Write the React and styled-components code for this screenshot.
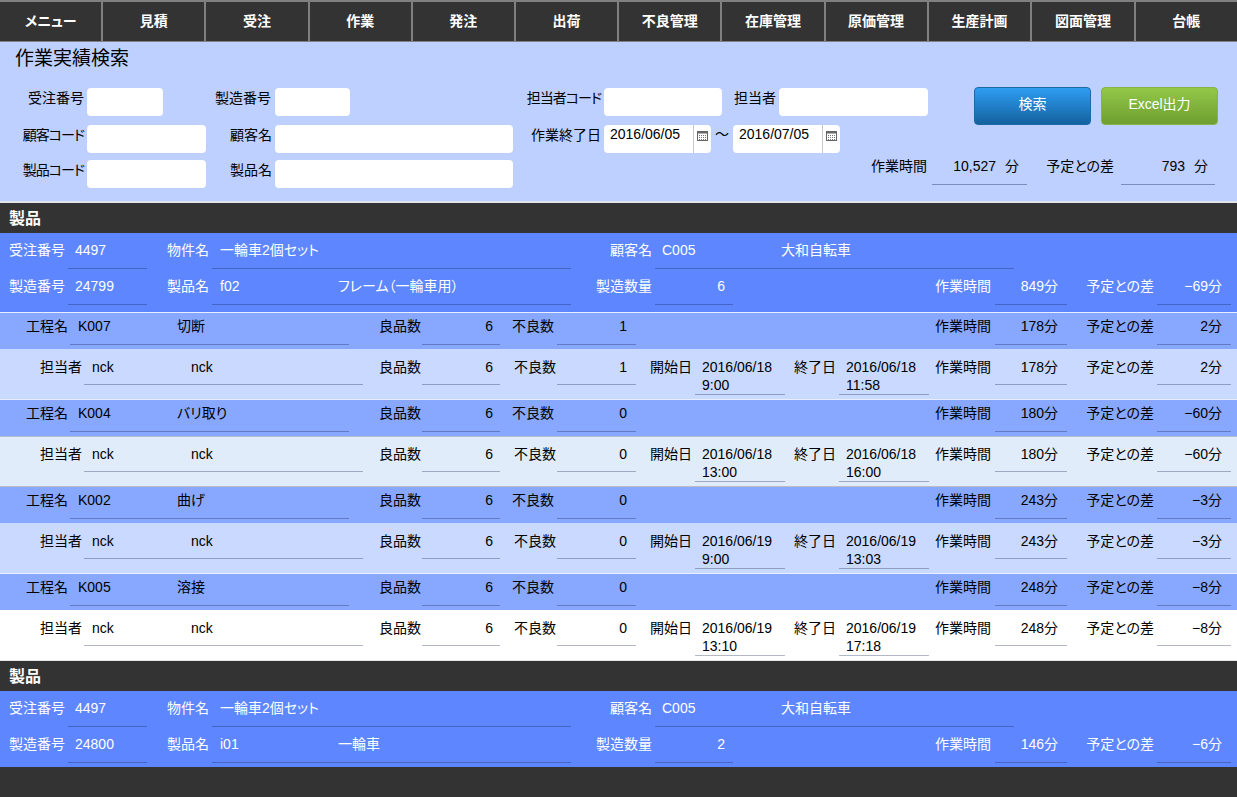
import React from "react";
import styled, { createGlobalStyle } from "styled-components";

const Global = createGlobalStyle`
  html, body { margin: 0; padding: 0; background: #333; height: 100%; overflow: hidden; }
  body {
    font-family: "Liberation Sans", "Noto Sans CJK JP", sans-serif;
    font-size: 14px;
    color: #000;
    font-feature-settings: "palt";
  }
  * { box-sizing: border-box; }
`;

const Nav = styled.nav`
  display: grid;
  grid-template-columns: repeat(9, 103.2px) repeat(2, 103.5px) 1fr;
  height: 42px;
  background: #333;
  border-top: 2px solid #808080;
  border-bottom: 1px solid #808080;
`;
const NavItem = styled.a`
  display: flex;
  align-items: center;
  justify-content: center;
  padding-bottom: 3px;
  color: #fff;
  font-weight: 700;
  font-size: 14px;
  border-right: 2px solid #808080;
  &:last-child { border-right: none; }
`;

const Panel = styled.section`
  height: 161px;
  background: #bdd0ff;
  border-bottom: 2px solid #dfe3ea;
`;
const Title = styled.h1`
  margin: 0;
  padding: 6px 0 0 15px;
  height: 45px;
  font-size: 19px;
  font-weight: 400;
  line-height: 22px;
`;
const Top = styled.div`
  display: flex;
  align-items: flex-start;
`;
const Fields = styled.div`
  display: flex;
  flex-direction: column;
  padding-top: 1px;
  width: 928px;
`;
const FormRow = styled.div`
  display: flex;
  align-items: flex-start;
  height: 28px;
  margin-bottom: ${(p) => p.$mb || 0}px;
`;
const FormLabel = styled.label`
  display: block;
  width: ${(p) => p.$w}px;
  margin-right: ${(p) => p.$mr ?? 3}px;
  text-align: right;
  line-height: 20px;
  letter-spacing: ${(p) => (p.$tight ? "-1px" : "0")};
  white-space: nowrap;
  flex: none;
`;
const Input = styled.input`
  display: block;
  flex: none;
  width: ${(p) => p.$w}px;
  height: 28px;
  padding: 0 6px;
  border: none;
  border-radius: 4px;
  background: #fff;
  box-shadow: 0 0 1px #c4cfe6;
  outline: none;
`;
const DateBox = styled.div`
  display: flex;
  flex: none;
  width: 107px;
  height: 28px;
  background: #fff;
  border-radius: 4px;
  box-shadow: 0 0 1px #c4cfe6;
`;
const DateText = styled.span`
  flex: 1;
  padding-left: 6px;
  line-height: 19px;
  border-right: 1px solid #c8c8c8;
`;
const CalButton = styled.span`
  display: flex;
  width: 17px;
  justify-content: center;
  padding-top: 6px;
`;
const Tilde = styled.span`
  flex: none;
  width: 22px;
  text-align: center;
  line-height: 18px;
`;
const Buttons = styled.div`
  display: flex;
  gap: 10px;
  margin-left: 46px;
`;
const Button = styled.button`
  width: 117px;
  height: 38px;
  padding: 0 0 7px;
  color: #fff;
  font: inherit;
  border-radius: 4px;
  border: 1px solid ${(p) => (p.$green ? "#85b542" : "#1b6aa8")};
  background: ${(p) =>
    p.$green
      ? "linear-gradient(#93c748, #6e9f30)"
      : "linear-gradient(#2f9df2, #14629f)"};
`;
const SumValue = styled.div`
  display: flex;
  flex: none;
  width: ${(p) => p.$w}px;
  height: 25px;
  line-height: 12px;
  border-bottom: 1px solid rgba(40, 60, 110, 0.45);
`;
const SumNumber = styled.span`
  width: 64px;
  text-align: right;
  margin-right: 9px;
`;
const SumLabel = styled(FormLabel)`
  line-height: 12px;
`;

const Header = styled.h2`
  margin: 0;
  height: 30px;
  padding-left: 9px;
  background: #333;
  color: #fff;
  font-size: 16px;
  font-weight: 700;
  line-height: 32px;
`;
const Product = styled.section`
  background: #5d86ff;
  color: #fff;
  padding-bottom: ${(p) => p.$pb}px;
  border-bottom: ${(p) => (p.$line ? "1px solid #e8eeff" : "none")};
`;
const Row = styled.div`
  display: flex;
  align-items: flex-start;
  height: 36px;
  --cell-h: 36px;
  --text-h: 34px;
`;
const Process = styled(Row)`
  background: #88a8ff;
  --cell-h: 32px;
  --text-h: 27px;
`;
const Worker = styled(Row)`
  height: 51px;
  --cell-h: 35px;
  --text-h: 34px;
  background: ${(p) => p.$bg};
  border-top: 1px solid ${(p) => p.$topLine || p.$bg};
  border-bottom: 1px solid ${(p) => p.$bottomLine || "#e8eeff"};
`;
const Label = styled.span`
  flex: none;
  width: ${(p) => p.$w}px;
  margin-right: ${(p) => p.$mr ?? 3}px;
  text-align: right;
  line-height: var(--text-h);
  white-space: nowrap;
`;
const Value = styled.span`
  flex: none;
  width: ${(p) => p.$w}px;
  height: var(--cell-h);
  line-height: var(--text-h);
  padding: ${(p) => (p.$right ? `0 ${p.$pad ?? 8}px 0 0` : `0 0 0 ${p.$pad ?? 8}px`)};
  text-align: ${(p) => (p.$right ? "right" : "left")};
  border-bottom: 1px solid rgba(20, 30, 70, 0.32);
  white-space: nowrap;
`;
const DateValue = styled.span`
  flex: none;
  display: block;
  width: 90px;
  height: 45px;
  padding: 8px 0 0 7px;
  line-height: 18px;
  border-bottom: 1px solid rgba(20, 30, 70, 0.32);
  white-space: nowrap;
`;
const MetricGroup = styled.div`
  display: flex;
  margin-left: auto;
  padding-right: 6px;
`;

const Calendar = () => (
  <svg width="11" height="10" viewBox="0 0 11 10">
    <rect x="0.5" y="0.5" width="10" height="9" fill="#fff" stroke="#666" />
    <rect x="0" y="0" width="11" height="2.5" fill="#666" />
    {[2, 4, 6, 8].map((x) =>
      [4, 6, 8].map((y) => <rect key={`${x}-${y}`} x={x} y={y} width="1" height="1" fill="#777" />)
    )}
  </svg>
);

const DateField = ({ value }) => (
  <DateBox>
    <DateText>{value}</DateText>
    <CalButton><Calendar /></CalButton>
  </DateBox>
);

const Metrics = ({ time, diff }) => (
  <MetricGroup>
    <Label $w={56} $mr={4}>作業時間</Label>
    <Value $w={72} $right $pad={9}>{time}分</Value>
    <Label $w={87}>予定との差</Label>
    <Value $w={74} $right $pad={9}>{diff}分</Value>
  </MetricGroup>
);

const ProductBlock = ({ pb, line, no, code, name, qty, time, diff }) => (
  <Product $pb={pb} $line={line}>
    <Row>
      <Label $w={65}>受注番号</Label>
      <Value $w={79} $pad={7}>4497</Value>
      <Label $w={62}>物件名</Label>
      <Value $w={359}>一輪車2個セット</Value>
      <Label $w={81}>顧客名</Label>
      <Value $w={118} $pad={7}>C005</Value>
      <Value $w={241}>大和自転車</Value>
    </Row>
    <Row>
      <Label $w={65}>製造番号</Label>
      <Value $w={79} $pad={7}>{no}</Value>
      <Label $w={62}>製品名</Label>
      <Value $w={119}>{code}</Value>
      <Value $w={240} $pad={7}>{name}</Value>
      <Label $w={81}>製造数量</Label>
      <Value $w={78} $right>{qty}</Value>
      <Metrics time={time} diff={diff} />
    </Row>
  </Product>
);

const Step = ({ code, name, good, bad, time, diff }) => (
  <Process>
    <Label $w={68} $mr={2}>工程名</Label>
    <Value $w={99}>{code}</Value>
    <Value $w={180}>{name}</Value>
    <Label $w={72} $mr={1}>良品数</Label>
    <Value $w={78} $right $pad={7}>{good}</Value>
    <Label $w={54}>不良数</Label>
    <Value $w={79} $right $pad={9}>{bad}</Value>
    <Metrics time={time} diff={diff} />
  </Process>
);

const Work = ({ bg, topLine, bottomLine, good, bad, start, end, time, diff }) => (
  <Worker $bg={bg} $topLine={topLine} $bottomLine={bottomLine}>
    <Label $w={82} $mr={2}>担当者</Label>
    <Value $w={99}>nck</Value>
    <Value $w={180}>nck</Value>
    <Label $w={58} $mr={1}>良品数</Label>
    <Value $w={78} $right $pad={7}>{good}</Value>
    <Label $w={56} $mr={1}>不良数</Label>
    <Value $w={79} $right $pad={9}>{bad}</Value>
    <Label $w={56}>開始日</Label>
    <DateValue>{start[0]}<br />{start[1]}</DateValue>
    <Label $w={51}>終了日</Label>
    <DateValue>{end[0]}<br />{end[1]}</DateValue>
    <Metrics time={time} diff={diff} />
  </Worker>
);

const menu = ["メニュー", "見積", "受注", "作業", "発注", "出荷", "不良管理", "在庫管理", "原価管理", "生産計画", "図面管理", "台帳"];

const steps = [
  { code: "K007", name: "切断", bad: 1, time: 178, diff: 2, start: ["2016/06/18", "9:00"], end: ["2016/06/18", "11:58"], bg: "#c9d9ff" },
  { code: "K004", name: "バリ取り", bad: 0, time: 180, diff: "−60", start: ["2016/06/18", "13:00"], end: ["2016/06/18", "16:00"], bg: "#e0ecfa", topLine: "#b4bdd0", bottomLine: "#b9bcc2" },
  { code: "K002", name: "曲げ", bad: 0, time: 243, diff: "−3", start: ["2016/06/19", "9:00"], end: ["2016/06/19", "13:03"], bg: "#c9d9ff" },
  { code: "K005", name: "溶接", bad: 0, time: 248, diff: "−8", start: ["2016/06/19", "13:10"], end: ["2016/06/19", "17:18"], bg: "#ffffff", bottomLine: "#e6e6e6" },
];

export default function App() {
  return (
    <>
      <Global />
      <Nav>
        {menu.map((m) => <NavItem key={m}>{m}</NavItem>)}
      </Nav>
      <Panel>
        <Title>作業実績検索</Title>
        <Top>
          <Fields>
            <FormRow $mb={9}>
              <FormLabel $w={84}>受注番号</FormLabel>
              <Input $w={76} />
              <FormLabel $w={108} $mr={4}>製造番号</FormLabel>
              <Input $w={75} />
              <FormLabel $w={251} $tight>担当者コード</FormLabel>
              <Input $w={118} />
              <FormLabel $w={54}>担当者</FormLabel>
              <Input $w={149} />
            </FormRow>
            <FormRow $mb={7}>
              <FormLabel $w={84} $tight>顧客コード</FormLabel>
              <Input $w={119} />
              <FormLabel $w={66}>顧客名</FormLabel>
              <Input $w={238} />
              <FormLabel $w={88}>作業終了日</FormLabel>
              <DateField value="2016/06/05" />
              <Tilde>～</Tilde>
              <DateField value="2016/07/05" />
            </FormRow>
          </Fields>
          <Buttons>
            <Button>検索</Button>
            <Button $green>Excel出力</Button>
          </Buttons>
        </Top>
        <FormRow>
          <FormLabel $w={84} $tight>製品コード</FormLabel>
          <Input $w={119} />
          <FormLabel $w={66}>製品名</FormLabel>
          <Input $w={238} />
          <SumLabel $w={414} $mr={5}>作業時間</SumLabel>
          <SumValue $w={95}><SumNumber>10,527</SumNumber>分</SumValue>
          <SumLabel $w={87} $mr={7}>予定との差</SumLabel>
          <SumValue $w={94}><SumNumber>793</SumNumber>分</SumValue>
        </FormRow>
      </Panel>
      <Header>製品</Header>
      <ProductBlock pb={7} line no="24799" code="f02" name="フレーム（一輪車用）" qty={6} time={849} diff="−69" />
      {steps.map((s) => (
        <React.Fragment key={s.code}>
          <Step code={s.code} name={s.name} good={6} bad={s.bad} time={s.time} diff={s.diff} />
          <Work bg={s.bg} topLine={s.topLine} bottomLine={s.bottomLine} good={6} bad={s.bad} start={s.start} end={s.end} time={s.time} diff={s.diff} />
        </React.Fragment>
      ))}
      <Header>製品</Header>
      <ProductBlock pb={4} no="24800" code="i01" name="一輪車" qty={2} time={146} diff="−6" />
    </>
  );
}
